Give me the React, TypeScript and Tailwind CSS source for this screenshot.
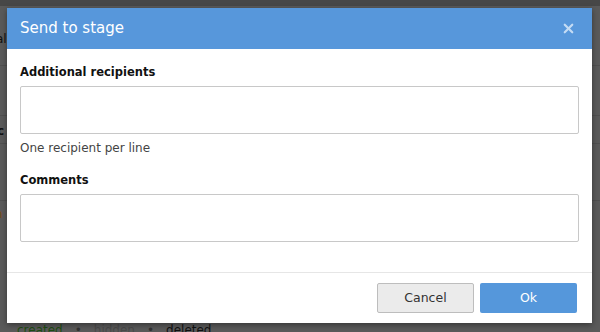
import { X } from 'lucide-react'

const font = { fontFamily: '"DejaVu Sans", Verdana, sans-serif' }

export default function App() {
  return (
    <div className="relative w-[600px] h-[332px] overflow-hidden bg-[#5a5a5a]" style={font}>
      {/* page behind the overlay */}
      <div className="flex flex-col h-full">
        <div className="h-[6px] bg-[#474747]" />
        <div className="h-[60px] border-b border-[#505050] pt-[24px] text-[12px] text-[#111] -ml-[4px]">al</div>
        <div className="h-[50px] border-b border-[#505050]" />
        <div className="h-[28px] border-b border-[#505050] pt-[6px] text-[12px] font-bold text-[#111] -ml-[3px]">c</div>
        <div className="h-[57px] border-b border-[#505050]" />
        <div className="h-[30px] pt-[4px] text-[12px] text-[#7a4a1a] -ml-[5px]">n</div>
        <div className="flex-1" />
        <div className="flex items-center gap-[12px] pl-[17px] text-[12px] leading-[14px] -mb-[5px]">
          <span className="text-[#1f4d12]">created</span>
          <span className="text-[#333]">•</span>
          <span className="text-[#4a4a4a]">hidden</span>
          <span className="text-[#333]">•</span>
          <span className="text-[#111]">deleted</span>
        </div>
      </div>

      {/* dialog */}
      <div className="absolute left-[7px] top-[8px] w-[585px] h-[315px] bg-white flex flex-col shadow-[0_2px_6px_rgba(0,0,0,0.4)]">
        <div className="h-[41px] bg-[#5797db] flex items-center justify-between pl-[13px] pr-[16px]">
          <span className="text-[15px] text-white">Send to stage</span>
          <X size={15} strokeWidth={3.5} color="#c4dcf4" />
        </div>

        <div className="flex-1 px-[13px] pt-[15px]">
          <div className="text-[11.5px] leading-[16px] font-bold text-[#111]">Additional recipients</div>
          <div className="mt-[6px] h-[48px] rounded-[2px] border border-[#c8c8c8]" />
          <div className="mt-[6px] text-[12px] leading-[16px] text-[#444]">One recipient per line</div>
          <div className="mt-[16px] text-[11.5px] leading-[16px] font-bold text-[#111]">Comments</div>
          <div className="mt-[6px] h-[48px] rounded-[2px] border border-[#c8c8c8]" />
        </div>

        <div className="h-[51px] border-t border-[#e6e6e6] flex items-start justify-end gap-[6px] pt-[10px] pr-[15px]">
          <button className="w-[97px] h-[30px] rounded-[2px] border border-[#bdbdbd] bg-[#ebebeb] text-[12.5px] text-[#333]">
            Cancel
          </button>
          <button className="w-[97px] h-[30px] rounded-[2px] bg-[#5597db] text-[12.5px] text-white">
            Ok
          </button>
        </div>
      </div>
    </div>
  )
}
